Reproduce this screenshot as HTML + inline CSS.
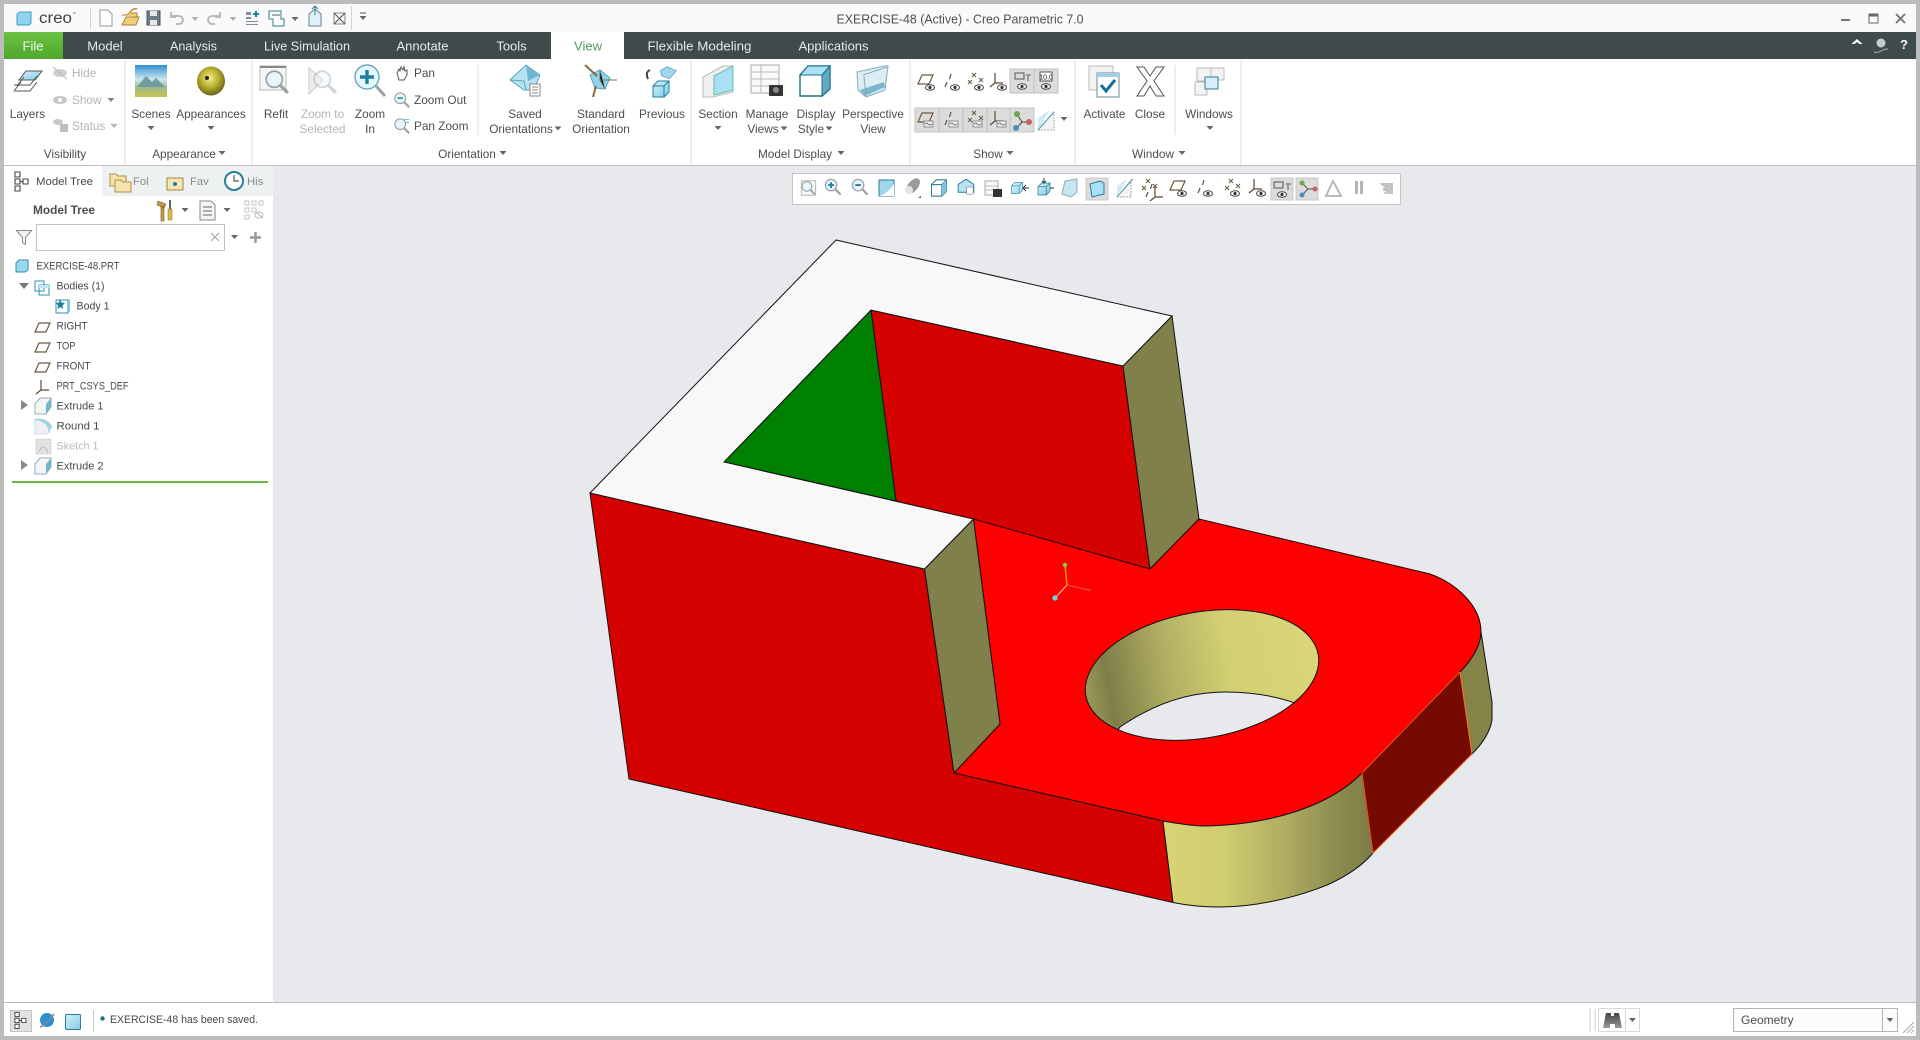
<!DOCTYPE html>
<html><head><meta charset="utf-8"><title>EXERCISE-48 (Active) - Creo Parametric 7.0</title>
<style>
html,body{margin:0;padding:0;width:1920px;height:1040px;overflow:hidden;background:#e7e9ed}
svg{display:block}
text{font-family:"Liberation Sans",sans-serif;font-size:11.8px;fill:#4a4e4e}
.m{text-anchor:middle}
.g{fill:#b4b4b4}
.t{font-size:13px;fill:#e6eaea}
.tr{font-size:11.3px;fill:#454a4a}
</style></head><body>
<svg width="1920" height="1040" viewBox="0 0 1920 1040" xmlns="http://www.w3.org/2000/svg">
<defs>
<linearGradient id="fileg" x1="0" y1="0" x2="0" y2="1"><stop offset="0" stop-color="#6cc243"/><stop offset="1" stop-color="#4fa82c"/></linearGradient>
<linearGradient id="yel" gradientUnits="userSpaceOnUse" x1="1162" y1="0" x2="1373" y2="0"><stop offset="0" stop-color="#d6d474"/><stop offset=".3" stop-color="#cfcd70"/><stop offset=".57" stop-color="#b0ae60"/><stop offset=".83" stop-color="#8c8c50"/><stop offset="1" stop-color="#7c7c45"/></linearGradient>
<linearGradient id="hol" gradientUnits="userSpaceOnUse" x1="1085" y1="0" x2="1319" y2="0"><stop offset="0" stop-color="#9a9858"/><stop offset=".1" stop-color="#7e7e48"/><stop offset=".35" stop-color="#b0ae62"/><stop offset=".62" stop-color="#d2d072"/><stop offset="1" stop-color="#d8d678"/></linearGradient>
<linearGradient id="blu" x1="0" y1="0" x2="1" y2="1"><stop offset="0" stop-color="#d8f1fb"/><stop offset="1" stop-color="#7fcbe6"/></linearGradient>
<linearGradient id="sky" x1="0" y1="0" x2="0" y2="1"><stop offset="0" stop-color="#2f8fd0"/><stop offset=".45" stop-color="#cfe6ee"/><stop offset=".7" stop-color="#9fb98d"/><stop offset="1" stop-color="#c8c24a"/></linearGradient>
<radialGradient id="ball" cx=".45" cy=".4" r=".65"><stop offset="0" stop-color="#f4ee90"/><stop offset=".5" stop-color="#b8ae2c"/><stop offset="1" stop-color="#59551c"/></radialGradient>
<linearGradient id="bino" x1="0" y1="0" x2="0" y2="1"><stop offset="0" stop-color="#444"/><stop offset="1" stop-color="#999"/></linearGradient>
<clipPath id="hc"><ellipse cx="1202" cy="675" rx="118" ry="63" transform="rotate(-10 1202 675)"/></clipPath>
<path id="tri" d="M-3.5 -2h7l-3.5 4z" fill="#666"/>
<g id="eye"><ellipse cx="4" cy="5.500" rx="4.500" ry="2.800" fill="#fff" stroke="#444"/><circle cx="4" cy="5.500" r="1.600" fill="#333"/></g>
<path id="plane" d="M-4 -7H7L3 2H-8Z" fill="none" stroke="#6b5a3c" stroke-width="1.2"/>
<path id="axis" d="M0 -8L-1.5 -3M-4 0L-6 5" stroke="#555" stroke-width="1.2" fill="none"/>
<path id="pts" d="M-2 -8l4 4M2 -8l-4 4M5 -3l4 4M9 -3l-4 4M-6 -1l4 4M-2 -1l-4 4" stroke="#6b5a3c" fill="none"/>
<path id="cs" d="M-3 -8V2M-3 2H5M-3 2L-8 6" stroke="#5a4a30" stroke-width="1.2" fill="none"/>
<g id="tag"><path d="M-1 1h9v6h-9z" fill="#eee" stroke="#777" stroke-width=".8"/><path d="M0 4q2 -2 3 0t4 0" fill="none" stroke="#555" stroke-width=".8"/></g>
<g id="mag"><circle cx="-2" cy="-2" r="6" fill="#eaf5fb" stroke="#93a4ad" stroke-width="1.3"/><path d="M2.5 2.5L8 8" stroke="#a0a0a0" stroke-width="2.4"/></g>
<g id="lcube"><path d="M-11 -5L-4 -12H11V5L4 12H-11Z" fill="#fff" stroke="#1d6f85" stroke-width="1.4"/><path d="M-11 -5H4V12M4 -5L11 -12" fill="none" stroke="#1d6f85" stroke-width="1.4"/><path d="M4 -5L11 -12V5L4 12Z" fill="#7fc4dd"/></g>
<g id="scube"><path d="M-8 -3L-3 -8H8V3L3 8H-8Z" fill="url(#blu)" stroke="#1d7f9b"/><path d="M-8 -3H3V8M3 -3L8 -8" fill="none" stroke="#1d7f9b"/></g>
<g id="ftree"><path d="M-6 -9h5v5h-5zM-6 -2h5v5h-5zM-6 5h5v5h-5zM2 -2h5v5h-5zM-1 .5h3" fill="#fff" stroke="#444" stroke-width="1.1"/></g>
<g id="folder"><path d="M-8 -4h6l2 2h8v10h-16z" fill="#f6e4ae" stroke="#b0904c"/></g>
</defs>

<!-- frame -->
<rect width="1920" height="1040" fill="#bcbcbc"/>
<rect x="4" y="4" width="1912" height="28" fill="#fafafc"/>
<rect x="4" y="32" width="1912" height="27" fill="#3f4a4b"/>
<rect x="4" y="59" width="1912" height="106" fill="#fff"/>
<rect x="4" y="165" width="1912" height="1" fill="#bdbfc2"/>
<rect x="4" y="166" width="1912" height="837" fill="#e7e9ed"/>
<rect x="4" y="1003" width="1912" height="33" fill="#fff"/>
<rect x="4" y="1002" width="1912" height="1" fill="#b8babc"/>

<!-- QAT -->
<path d="M17 14l3-2h11v11l-2 2H18a1 1 0 0 1-1-1Z" fill="#8fd3ec" stroke="#3d9cc0"/>
<text x="39" y="23" textLength="33" lengthAdjust="spacingAndGlyphs" style="font-size:15.5px;fill:#3e4444">creo</text><text x="73" y="17" style="font-size:7px;fill:#3e4444">°</text>
<rect x="90" y="7" width="1" height="22" fill="#d4d4d4"/>
<path d="M100 10h8l4 4v12h-12z" fill="#fff" stroke="#9a9a9a"/>
<path d="M122 15h5l2-2h8v4h-11l-4 8h14l3-8h-3" fill="#f1cd78" stroke="#a88638"/><path d="M130 12q3-4 7-3" stroke="#c08a2c" fill="none" stroke-width="1.5"/>
<path d="M147 11h13v14h-13z" fill="#6b7a86" stroke="#4a5660"/><path d="M150 11h7v5h-7zM150 20h7v5h-7z" fill="#e8e8e8"/>
<path d="M171 16h8a4 4 0 0 1 0 8h-3M171 12v5h5" fill="none" stroke="#b4b4b4" stroke-width="1.8"/><use href="#tri" x="195" y="19" opacity=".5"/>
<path d="M220 16h-8a4 4 0 0 0 0 8h3M220 12v5h-5" fill="none" stroke="#b4b4b4" stroke-width="1.8"/><use href="#tri" x="233" y="19" opacity=".5"/>
<path d="M246 12h5v3h-5zM246 17h5v2h-5zM246 21h12v1h-12zM246 24h12v1h-12z" fill="#7d8d97"/><path d="M253 14h6M256 11v6" stroke="#1c7fa4" stroke-width="2"/>
<path d="M269 11h12v8h3v7h-11v-7h-4z" fill="#fff" stroke="#2d7d96"/><path d="M272 15h8" stroke="#555"/><use href="#tri" x="295" y="19"/>
<path d="M309 14l6-5 6 5v12h-12z" fill="#dff1f8" stroke="#66808c"/><path d="M315 6v9M312 9l3-3 3 3" stroke="#2d7d96" fill="none"/>
<path d="M334 13h11v11h-11z" fill="#f6f6f6" stroke="#888"/><path d="M334 13l11 11M345 13l-11 11" stroke="#555"/>
<rect x="351" y="6" width="1" height="24" fill="#d4d4d4"/>
<path d="M360 13h6" stroke="#555"/><use href="#tri" x="363" y="18" style="fill:#555"/>

<text class="m" x="960" y="23.5" textLength="247" lengthAdjust="spacingAndGlyphs" style="font-size:12.5px;fill:#4b4f50">EXERCISE-48 (Active) - Creo Parametric 7.0</text>
<rect x="1841" y="19" width="9" height="2" fill="#777"/>
<path d="M1869 14h9v9h-9z" fill="none" stroke="#666"/><rect x="1869" y="14" width="9" height="2.5" fill="#666"/>
<path d="M1896 14l9 9M1905 14l-9 9" stroke="#707070" stroke-width="1.8"/>

<!-- tabs -->
<rect x="4" y="32" width="59" height="27" fill="url(#fileg)"/>
<rect x="551" y="32" width="73" height="27" fill="#fff"/>
<text class="m t" x="33" y="50.5" style="fill:#f3fbef">File</text>
<text class="m t" x="105" y="50.5">Model</text>
<text class="m t" x="193.5" y="50.5" textLength="47" lengthAdjust="spacingAndGlyphs">Analysis</text>
<text class="m t" x="307" y="50.5" textLength="86" lengthAdjust="spacingAndGlyphs">Live Simulation</text>
<text class="m t" x="422.500" y="50.5">Annotate</text>
<text class="m t" x="511.500" y="50.5">Tools</text>
<text class="m t" x="588" y="50.5" style="fill:#4f9a5c">View</text>
<text class="m t" x="699.500" y="50.5" textLength="104" lengthAdjust="spacingAndGlyphs">Flexible Modeling</text>
<text class="m t" x="833.500" y="50.5">Applications</text>
<path d="M1851.500 44l5.500-5 5.500 5h-3l-2.500-2-2.500 2z" fill="#fff"/>
<circle cx="1881" cy="43" r="4.500" fill="#c8cccc"/><path d="M1874 52q4 1 7-1t7-2" stroke="#aaa" fill="none"/>
<text class="m" x="1904" y="49" style="font-size:13px;font-weight:bold;fill:#f4f4f4">?</text>

<!-- ribbon separators -->
<path d="M125 60V165M252 60V165M691 60V165M910 60V165M1075 60V165M1241 60V165M478 65V135M1175 65V135" stroke="#dcdcdc" fill="none"/>

<!-- Visibility -->
<g transform="translate(27 82)"><path d="M-8 -2L-1 -11H15L8 -2Z" fill="url(#blu)" stroke="#555"/><path d="M-10 4L-3 -5" stroke="#555"/><path d="M-13 3H3L10 -6" fill="none" stroke="#555"/><path d="M-13 9L-6 0M-13 9H3L10 0" fill="none" stroke="#555"/></g>
<text class="m" x="27.500" y="118">Layers</text>
<g opacity=".55"><ellipse cx="60" cy="73" rx="7" ry="4" fill="#aaa"/><path d="M53 67l14 12" stroke="#777"/>
<ellipse cx="60" cy="100" rx="7" ry="4" fill="#999"/><circle cx="60" cy="100" r="2" fill="#fff"/>
<ellipse cx="58" cy="122" rx="5" ry="3" fill="#999"/><rect x="60" y="124" width="8" height="8" fill="#888"/></g>
<text class="g" x="72" y="77">Hide</text><text class="g" x="72" y="104">Show</text><use href="#tri" x="111" y="100" opacity=".8"/>
<text class="g" x="72" y="130">Status</text><use href="#tri" x="114" y="126" opacity=".5"/>
<text class="m" x="65" y="158">Visibility</text>

<!-- Appearance -->
<rect x="135" y="65" width="32" height="32" fill="url(#sky)"/><path d="M137 87l9-11 6 6 4-4 9 9z" fill="#6f9c9c"/>
<text class="m" x="151" y="118">Scenes</text><use href="#tri" x="151" y="128"/>
<ellipse cx="211" cy="81" rx="14" ry="14.500" fill="url(#ball)"/><circle cx="207" cy="78" r="2" fill="#222"/>
<text class="m" x="211" y="118">Appearances</text><use href="#tri" x="211" y="128"/>
<text class="m" x="184" y="158">Appearance</text><use href="#tri" x="222" y="153"/>

<!-- Orientation -->
<rect x="260" y="66" width="26" height="24" fill="#f6f6f6" stroke="#b8b8b8"/><rect x="260" y="66" width="26" height="2" fill="#888"/><g transform="translate(277 82) scale(1.35)"><use href="#mag"/></g>
<text class="m" x="276" y="118">Refit</text>
<path d="M309 68l14 12-14 14z" fill="#ececec" stroke="#ccc"/><g transform="translate(325 82) scale(1.35)" opacity=".45"><use href="#mag"/></g>
<text class="m g" x="322.500" y="118">Zoom to</text><text class="m g" x="322.500" y="133">Selected</text>
<circle cx="367" cy="77" r="12" fill="#e6f6fd" stroke="#6aa8c2" stroke-width="1.4"/><path d="M376 86l9 10" stroke="#a0a0a0" stroke-width="3"/><path d="M367 70v14M360 77h14" stroke="#1d7f9b" stroke-width="3.400"/>
<text class="m" x="370" y="118">Zoom</text><text class="m" x="370" y="133">In</text>
<path d="M397 73l2-4 1 2 1-4 2 3 1-3 1 4 2-1v5l-3 5h-5z" fill="#fff" stroke="#555"/>
<g transform="translate(402 100) scale(.9)"><use href="#mag"/><path d="M-5 -2h6" stroke="#1d7f9b" stroke-width="1.600"/></g>
<g transform="translate(402 126) scale(.9)"><use href="#mag"/><path d="M2 -7h6M3 -4h5" stroke="#5ab0d0"/></g>
<text x="414" y="77">Pan</text><text x="414" y="104">Zoom Out</text><text x="414" y="130">Pan Zoom</text>
<path d="M526 65l14 10-6 15h-10L510 80z" fill="#b8e2f2" stroke="#5ca7c4"/><path d="M526 65l14 10-12 6z" fill="#6fb6d0"/><path d="M510 80l14 1 2 9" fill="none" stroke="#5ca7c4"/>
<rect x="530" y="84" width="10" height="12" fill="#fff" stroke="#888"/><path d="M532 87h6M532 90h6M532 93h6" stroke="#888"/>
<text class="m" x="525" y="118">Saved</text><text class="m" x="521" y="133">Orientations</text><use href="#tri" x="558" y="128.500"/>
<path d="M590 75l10-5 10 8-5 11-10-1z" fill="#8fd3ec" stroke="#5ca7c4"/><path d="M600 70v10l5 9M600 80h17" stroke="#6b7a4c"/><path d="M585 65l12 11" stroke="#8a6a3a" stroke-width="2"/><path d="M596 86l-3 11" stroke="#8a6a3a" stroke-width="2"/>
<text class="m" x="601" y="118">Standard</text><text class="m" x="601" y="133">Orientation</text>
<g transform="translate(667 76) scale(.85)"><path d="M-8 -6L0 -11 11 -6 3 3 -6 0Z" fill="#9fd6ee" stroke="#5ca7c4"/></g>
<path d="M650 70q-5 2-2 9" stroke="#444" stroke-width="2" fill="none"/>
<g transform="translate(661 89)"><use href="#scube"/></g>
<text class="m" x="662" y="118">Previous</text>
<text class="m" x="467" y="158">Orientation</text><use href="#tri" x="503" y="153"/>

<!-- Model display -->
<path d="M703 77L723 66H733V92L713 97H703Z" fill="#efefef" stroke="#bbb"/><path d="M714 76L733 66V90L714 95Z" fill="#a9e0f4" stroke="#6bb"/>
<text class="m" x="718" y="118">Section</text><use href="#tri" x="718" y="128"/>
<rect x="751" y="65" width="28" height="28" fill="#fafafa" stroke="#aaa"/><path d="M751 72h28M751 79h28M751 86h28M761 65v28" stroke="#bbb"/>
<rect x="769" y="85" width="14" height="11" rx="1" fill="#333"/><circle cx="776" cy="90" r="3" fill="#888"/>
<text class="m" x="767" y="118">Manage</text><text class="m" x="763" y="133">Views</text><use href="#tri" x="784" y="128.500"/>
<path d="M800 75L808 66H830V89L822 96H800Z" fill="#fff" stroke="#1d6f85" stroke-width="1.4"/><path d="M808 66H830L822 75H800Z" fill="#a9e0f4" stroke="#1d6f85"/><path d="M822 75L830 66V89L822 96Z" fill="#63a9c6" stroke="#1d6f85"/>
<text class="m" x="816" y="118">Display</text><text class="m" x="811" y="133">Style</text><use href="#tri" x="829" y="128.500"/>
<path d="M857 72L884 66H888L885 90L866 97L858 90Z" fill="#dbeef4" stroke="#8ab"/><path d="M863 75L887 67" stroke="#8ab"/><path d="M860 90l24-8 1 5-20 9z" fill="#7ab7cd"/><path d="M864 76l2 20" stroke="#8ab"/>
<text class="m" x="873" y="118">Perspective</text><text class="m" x="873" y="133">View</text>
<text class="m" x="795" y="158">Model Display</text><use href="#tri" x="841" y="153"/>

<!-- Show -->
<rect x="1010" y="69" width="48" height="24" fill="#dcdcdc" stroke="#c2c2c2"/><path d="M1034 69v24" stroke="#c2c2c2"/>
<rect x="915" y="108" width="119" height="24" fill="#dcdcdc" stroke="#c2c2c2"/><path d="M939 108v24M963 108v24M987 108v24M1010 108v24" stroke="#c2c2c2"/>
<use href="#plane" x="926" y="82"/><use href="#eye" x="926" y="82"/>
<use href="#axis" x="951" y="82"/><use href="#eye" x="951" y="82"/>
<use href="#pts" x="974" y="81"/><use href="#eye" x="975" y="82"/>
<use href="#cs" x="998" y="81"/><use href="#eye" x="998" y="82"/>
<path d="M1015 73h9v6h-9zM1026 75h5M1028 76v5" fill="none" stroke="#555"/><use href="#eye" x="1018" y="81"/>
<rect x="1040" y="72" width="12" height="9" fill="#fff" stroke="#555"/><text class="m" x="1046" y="79.500" style="font-size:7px;fill:#222">10.0</text><use href="#eye" x="1042" y="81"/>
<use href="#plane" x="926" y="120"/><use href="#tag" x="925" y="120"/>
<use href="#axis" x="951" y="120"/><use href="#tag" x="950" y="120"/>
<use href="#pts" x="974" y="119"/><use href="#tag" x="974" y="120"/>
<use href="#cs" x="998" y="119"/><use href="#tag" x="998" y="120"/>
<path d="M1017 114l5 8 -5 6M1022 122h7" stroke="#444" fill="none"/><circle cx="1017" cy="114" r="3" fill="#6aa84f"/><circle cx="1029" cy="122" r="3" fill="#c86060"/><circle cx="1016" cy="128" r="3" fill="#4d90b8"/>
<path d="M1038 130h16v-18Z" fill="#f4f4f4" stroke="#aaa" stroke-dasharray="2 1"/><path d="M1038 130V118L1050 110" fill="#cfeaf5"/><path d="M1038 130L1054 112" stroke="#5aa" stroke-width="1.200"/>
<use href="#tri" x="1064" y="119"/>
<text class="m" x="988" y="158">Show</text><use href="#tri" x="1010" y="153"/>

<!-- Window -->
<rect x="1089" y="66" width="24" height="24" fill="#f2f2f2" stroke="#bbb"/><rect x="1097" y="73" width="22" height="24" fill="#fff" stroke="#6a8a96"/><rect x="1097" y="73" width="22" height="4" fill="#9fcfe0"/>
<path d="M1101 85l5 6 9-11" stroke="#14729a" stroke-width="3" fill="none"/>
<text class="m" x="1104.500" y="118">Activate</text>
<path d="M1137 67h7l6 9 6-9h8l-10 14 10 15h-8l-6-10-6 10h-7l10-15z" fill="#fff" stroke="#555"/>
<text class="m" x="1150" y="118">Close</text>
<path d="M1197 68h14v13h-14zM1211 68h13v12h-13zM1195 82h12v13h-12z" fill="#f3f3f3" stroke="#bbb"/><rect x="1205" y="77" width="13" height="12" fill="#d6eef7" stroke="#2d7d96"/>
<text class="m" x="1209" y="118">Windows</text><use href="#tri" x="1210" y="128"/>
<text class="m" x="1153" y="158">Window</text><use href="#tri" x="1182" y="153"/>

<!-- left panel -->
<rect x="4" y="166" width="269" height="836" fill="#fff"/>
<rect x="102" y="166" width="171" height="30" fill="#eef1f1"/>
<g transform="translate(21 181)"><use href="#ftree"/></g>
<text x="36" y="185" class="tr" textLength="57" lengthAdjust="spacingAndGlyphs">Model Tree</text>
<g transform="translate(120 181)"><use href="#folder" x="-2" y="-3"/><use href="#folder" x="3" y="3"/></g><text x="133" y="185" class="tr" style="opacity:.6">Fol</text>
<g transform="translate(175 183)"><path d="M-8 -5h16v12h-16z" fill="#f6e6b8" stroke="#a8823c"/><circle r="2" cy="1" fill="#1d7f9b"/></g><text x="190" y="185" class="tr" style="opacity:.6">Fav</text>
<circle cx="234" cy="181" r="9" fill="#fff" stroke="#2d7d96" stroke-width="2"/><path d="M234 175v6h5" stroke="#333" fill="none"/><text x="247" y="185" class="tr" style="opacity:.6">His</text>

<text x="33" y="214" textLength="62" lengthAdjust="spacingAndGlyphs" style="font-size:11.500px;font-weight:bold;fill:#4a4e4e">Model Tree</text>
<path d="M158 201l8 3-2 4-7-3zM161 206h3v15h-3z" fill="#c79a4a" stroke="#7a5a20" stroke-width=".6"/><path d="M169 200h2v9h-2z" fill="#666"/><path d="M168 209h4v11h-4z" fill="#e0b84a" stroke="#8a6a20" stroke-width=".5"/>
<use href="#tri" x="185" y="210"/>
<path d="M200 201h11l4 4v15h-15z" fill="#f4f4f4" stroke="#888"/><path d="M203 207h9M203 211h9M203 215h9" stroke="#666"/>
<use href="#tri" x="227" y="210"/>
<path d="M245 201h4v4h-4zM252 201h4v4h-4zM259 201h4v4h-4zM245 208h4v4h-4zM252 208h4v4h-4zM245 215h4v4h-4z" fill="none" stroke="#c4c4c4"/><path d="M256 212l7 6" stroke="#bbb"/><ellipse cx="259" cy="215" rx="4" ry="3" fill="none" stroke="#bbb"/>

<path d="M16.500 230.500h15l-6 7v7l-3-2v-5z" fill="#f2f2f2" stroke="#8a8a8a"/>
<rect x="36.500" y="224.500" width="188" height="26" fill="#fff" stroke="#c2c2c2"/>
<path d="M211 233l8 8M219 233l-8 8" stroke="#aaa" stroke-width="1.200"/>
<use href="#tri" x="234.500" y="237" />
<path d="M255.500 232v11M250 237.500h11" stroke="#9a9a9a" stroke-width="2.500"/>

<g transform="translate(22 266)"><path d="M-6 -3l3 -3h9v10l-3 2h-9z" fill="#9bd8ef" stroke="#2d8fb0"/></g>
<text x="36.500" y="269.500" class="tr" textLength="83" lengthAdjust="spacingAndGlyphs">EXERCISE-48.PRT</text>
<path d="M19 283h10l-5 6z" fill="#777"/>
<g transform="translate(42 287)"><path d="M-7 -6h9v10h-9zM-3 -2h10v10h-10z" fill="#fff" stroke="#2d8fb0"/><path d="M-3 -2h10v3h-10z" fill="#bfe6f4"/></g>
<text x="56.500" y="289.500" class="tr" textLength="48" lengthAdjust="spacingAndGlyphs">Bodies (1)</text>
<g transform="translate(63 306)"><path d="M-7 -6h12v13h-12z" fill="#fff" stroke="#2d8fb0"/><path d="M5 -6l2-1v12l-2 2z" fill="#7fc4dd"/><path d="M-3 -7l1.500 3.500 3.500.5-2.500 2.500.6 3.500-2.600-2-3 2 .6-3.500-2.500-2.500 3.500-.5z" fill="#1d7f9b"/></g>
<text x="76.500" y="309.500" class="tr" textLength="33" lengthAdjust="spacingAndGlyphs">Body 1</text>
<use href="#plane" x="43" y="330" /><text x="56.500" y="329.500" class="tr" textLength="31" lengthAdjust="spacingAndGlyphs">RIGHT</text>
<use href="#plane" x="43" y="350" /><text x="56.500" y="349.500" class="tr" textLength="19" lengthAdjust="spacingAndGlyphs">TOP</text>
<use href="#plane" x="43" y="370" /><text x="56.500" y="369.500" class="tr" textLength="34" lengthAdjust="spacingAndGlyphs">FRONT</text>
<g transform="translate(44 388)"><use href="#cs" /></g><text x="56.500" y="389.500" class="tr" textLength="72" lengthAdjust="spacingAndGlyphs">PRT_CSYS_DEF</text>
<path d="M21 400v10l7-5z" fill="#888"/>
<g transform="translate(43 406)"><path d="M-8 -2l5-6h11v9l-5 7h-11z" fill="#f5f5f5" stroke="#9ab"/><path d="M3 -2l5-6v9l-5 7z" fill="#6fb6d0"/></g><text x="56.500" y="409.500" class="tr" textLength="47" lengthAdjust="spacingAndGlyphs">Extrude 1</text>
<g transform="translate(43 426)"><path d="M-8 -7q10 -1 14 4l3 3-5 8h-12z" fill="#f0f0f0" stroke="#cde"/><path d="M-8 -7q10 -1 14 4l3 3-3 8q0 -12 -14 -14z" fill="#9fd3e8"/></g><text x="56.500" y="429.500" class="tr" textLength="43" lengthAdjust="spacingAndGlyphs">Round 1</text>
<rect x="36" y="439" width="15" height="15" fill="#e2e2e2" stroke="#ccc" stroke-dasharray="2 1"/><path d="M39 452q4-10 9 0" fill="none" stroke="#bbb"/><text x="56.500" y="449.500" class="tr" textLength="42" lengthAdjust="spacingAndGlyphs" style="fill:#bcbcbc">Sketch 1</text>
<path d="M21 460v10l7-5z" fill="#888"/>
<g transform="translate(43 466)"><path d="M-8 -2l5-6h11v9l-5 7h-11z" fill="#f5f5f5" stroke="#9ab"/><path d="M3 -2l5-6v9l-5 7z" fill="#6fb6d0"/></g><text x="56.500" y="469.500" class="tr" textLength="47" lengthAdjust="spacingAndGlyphs">Extrude 2</text>
<rect x="12" y="481" width="256" height="2" fill="#6db33f"/>

<!-- floating toolbar -->
<rect x="792.500" y="173.500" width="608" height="31" fill="#fff" stroke="#c6c6c6"/>
<rect x="1086" y="178" width="22" height="22" fill="#dcdcdc" stroke="#c8c8c8"/>
<rect x="1271" y="178" width="22" height="22" fill="#dcdcdc" stroke="#c8c8c8"/>
<rect x="1296" y="178" width="22" height="22" fill="#dcdcdc" stroke="#c8c8c8"/>
<g transform="translate(808.500 188) scale(.8)"><rect x="-9" y="-9" width="18" height="18" fill="#f6f6f6" stroke="#aaa"/><use href="#mag"/></g>
<g transform="translate(833 187) scale(.95)"><use href="#mag"/><path d="M-5 -2h6M-2 -5v6" stroke="#1d7f9b" stroke-width="2"/></g>
<g transform="translate(860 187) scale(.95)"><use href="#mag"/><path d="M-5 -2h6" stroke="#1d7f9b" stroke-width="2"/></g>
<rect x="879" y="180" width="15" height="16" fill="#9fd6ee" stroke="#2d7d96"/><path d="M879 196q8-2 15-12v12z" fill="#fff"/>
<ellipse cx="913" cy="186" rx="5" ry="9" fill="#9a9a9a" transform="rotate(40 913 186)"/><circle cx="909" cy="190" r="4" fill="#e4e4e4"/><path d="M921 196l-3 2h3z" fill="#555"/>
<g transform="translate(939 188) scale(.68)"><use href="#lcube"/></g>
<g transform="translate(966 187) scale(.65)"><path d="M0 -12L12 -4V8H-12V-4Z" fill="#b8e2f2" stroke="#2d7d96" stroke-width="1.500"/><rect x="1" y="0" width="10" height="11" fill="#fff" stroke="#888"/></g>
<rect x="985" y="181" width="13" height="14" fill="#fafafa" stroke="#aaa"/><path d="M985 186h13M985 190h13" stroke="#bbb"/><rect x="993" y="189" width="9" height="8" fill="#333"/>
<g transform="translate(1017 188) scale(.7)" opacity=".8"><use href="#scube"/></g><path d="M1023 188h6M1026 185l-3 3 3 3" stroke="#333" fill="none"/>
<g transform="translate(1044 189) scale(.75)"><use href="#scube"/></g><path d="M1044 178v5M1042 181l2 2 2-2M1050 188h4" stroke="#333" fill="none"/>
<path d="M1065 181l12-2v13l-6 5-9-3z" fill="#c6e5ee" stroke="#8ab"/>
<path d="M1090 184l10-3 4 2v11l-12 3z" fill="#a9e0f4" stroke="#2d7d96"/>
<path d="M1117 197L1131 180V197Z" fill="#f4f4f4" stroke="#aaa" stroke-dasharray="2 1"/><path d="M1117 197V186L1127 179" fill="#cfeaf5"/><path d="M1117 197L1133 179" stroke="#5aa"/>
<use href="#pts" x="1148" y="187"/><use href="#axis" x="1152" y="192"/><use href="#cs" x="1158" y="195" />
<use href="#plane" x="1178" y="188"/><use href="#eye" x="1178" y="188"/>
<use href="#axis" x="1204" y="188"/><use href="#eye" x="1204" y="188"/>
<use href="#pts" x="1231" y="187"/><use href="#eye" x="1231" y="188"/>
<use href="#cs" x="1257" y="187"/><use href="#eye" x="1257" y="188"/>
<path d="M1274 182h9v6h-9zM1286 184h5M1288 185v5" fill="none" stroke="#555"/><use href="#eye" x="1278" y="189"/>
<path d="M1302 183l6 6-6 6M1308 189h7" stroke="#555" fill="none"/><circle cx="1302" cy="183" r="2.500" fill="#6aa84f"/><circle cx="1315" cy="189" r="2.500" fill="#c86060"/><circle cx="1302" cy="195" r="2.500" fill="#4d90b8"/>
<path d="M1333 181l8 15h-15z" fill="none" stroke="#bbb" stroke-width="2"/>
<path d="M1355 181h3v13h-3zM1360 181h3v13h-3z" fill="#b4b4b4"/><path d="M1379 183h14v11h-10l3-3h-3v-3h2z" fill="#c4c4c4"/>

<!-- MODEL -->
<path d="M871 310L1123 366L1150 569L896 501Z" fill="#d50000" stroke="#111"/>
<path d="M871 310L724 462L896 501Z" fill="#008000" stroke="#111"/>
<path d="M1123 366L1172 316L1199 519L1150 569Z" fill="#80804a" stroke="#111"/>
<path d="M973.500 519L1150 569L1199 519L1430 574C1455 583 1481 605 1481 632C1481 645 1472 660 1460 672L1362 773C1330 806 1270 825 1205 826C1190 826 1175 823 1163 821L954 773L1000 724Z" fill="#fe0000" stroke="#200" stroke-width="1"/>
<path d="M590 493L924.500 569L954 773L1163 821L1173 902.500L629 779Z" fill="#d50000" stroke="#111"/>
<path d="M924.500 569L973.500 519L1000 724L954 773Z" fill="#80804a" stroke="#111"/>
<path d="M1163 821C1175 823 1190 826 1205 826C1270 825 1330 806 1362 773L1373 853C1362 866 1345 877 1327 885C1290 900 1250 907 1220 907C1205 907 1190 906 1173 902.500Z" fill="url(#yel)" stroke="#111"/>
<path d="M1362 773L1460 672L1472 754L1373 853Z" fill="#750a00"/>
<path d="M1362 773L1460 672M1362 773L1373 853L1472 754L1460 672" fill="none" stroke="#f05a20" stroke-width="1"/>
<path d="M1460 672C1472 660 1481 645 1481 632L1492 702V720C1490 732 1482 744 1472 754Z" fill="#848448" stroke="none"/>
<path d="M1481 632L1492 702V720C1490 732 1482 744 1472 754" fill="none" stroke="#111"/>
<path d="M1460 672L1472 754" stroke="#f07a20"/>
<path d="M1460 672C1472 660 1481 645 1481 632" fill="none" stroke="#111"/>
<ellipse cx="1202" cy="675" rx="118" ry="63" transform="rotate(-10 1202 675)" fill="url(#hol)"/>
<g clip-path="url(#hc)"><path d="M1120 727C1155 703 1190 692 1225 692C1250 692 1275 696 1295 703L1340 770H1090Z" fill="#e7e9ed" stroke="#111"/></g>
<ellipse cx="1202" cy="675" rx="118" ry="63" transform="rotate(-10 1202 675)" fill="none" stroke="#111"/>
<path d="M836 240L1172 316L1123 366L871 310L724 462L973.500 519L924.500 569L590 493Z" fill="#f8f8f8" stroke="#111"/>
<path d="M1067 585L1065 565" stroke="#d9a000" stroke-width="1.500"/><circle cx="1065" cy="565" r="2.200" fill="#7ad04a"/>
<path d="M1067 585L1055 598" stroke="#f0c8a0"/><circle cx="1055" cy="598" r="2.600" fill="#5fdde8"/>
<path d="M1067 585L1089 590" stroke="#f05050"/><circle cx="1089" cy="590" r="1.500" fill="#f03030"/>

<!-- status bar -->
<rect x="10.500" y="1010.500" width="21" height="21" fill="#e2e2e2" stroke="#c4c4c4"/>
<g transform="translate(20 1020) scale(.85)"><use href="#ftree"/></g>
<ellipse cx="47" cy="1020" rx="7" ry="7" fill="#2d8fd0"/><path d="M40 1027q6-2 14-13" stroke="#888" fill="none" stroke-width="1.500"/>
<rect x="65.500" y="1014.500" width="15" height="15" rx="1" fill="url(#blu)" stroke="#2d7d96"/>
<rect x="93" y="1010" width="1" height="22" fill="#c8c8c8"/>
<circle cx="102.500" cy="1018.500" r="2.200" fill="#1f6f8a"/>
<text x="110" y="1023" class="tr" textLength="148" lengthAdjust="spacingAndGlyphs">EXERCISE-48 has been saved.</text>
<path d="M1590 1008v24M1595 1008v24" stroke="#d0d0d0"/>
<rect x="1598.500" y="1008.500" width="41" height="23" fill="#fff" stroke="#d8d8d8"/><path d="M1625.500 1009v22" stroke="#d8d8d8"/>
<path d="M1606 1013h5v3h3v-3h5l3 15h-7v-4h-5v4h-7z" fill="url(#bino)"/>
<use href="#tri" x="1632.500" y="1020"/>
<rect x="1733.500" y="1008.500" width="164" height="23" fill="#fcfcfc" stroke="#b4b4b4"/><path d="M1882.500 1009v22" stroke="#b4b4b4"/>
<text x="1741" y="1024" style="font-size:12px">Geometry</text>
<use href="#tri" x="1890" y="1020"/>
<path d="M1903 1033l11-11M1907 1033l7-7M1911 1033l3-3" stroke="#aaa"/>
</svg>
</body></html>
